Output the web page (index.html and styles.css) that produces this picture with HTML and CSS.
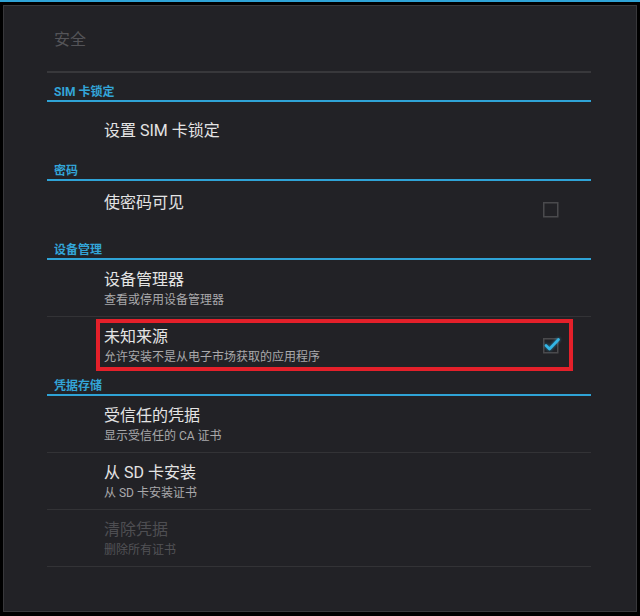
FILE: index.html
```html
<!DOCTYPE html>
<html lang="zh-CN">
<head>
<meta charset="UTF-8">
<title>安全</title>
<link rel="stylesheet" href="styles.css">
</head>
<body>

<div class="topbar"></div>

<div class="panel">

  <div class="page-head">
    <div class="page-title">安全</div>
  </div>

  <div class="prefs">

    <!-- SIM -->
    <div class="category first">SIM 卡锁定</div>
    <div class="pref">
      <div class="pref-text">
        <div class="pref-title">设置 SIM 卡锁定</div>
      </div>
    </div>

    <!-- PASSWORD -->
    <div class="category">密码</div>
    <div class="pref">
      <div class="pref-text raised">
        <div class="pref-title">使密码可见</div>
      </div>
      <svg class="check" width="16" height="16" viewBox="0 0 16 16">
        <rect x="0.75" y="0.75" width="14" height="14" fill="none" stroke="#4a4a4d" stroke-width="1.5"/>
      </svg>
    </div>

    <!-- DEVICE ADMIN -->
    <div class="category">设备管理</div>
    <div class="pref">
      <div class="pref-text">
        <div class="pref-title">设备管理器</div>
        <div class="pref-summary">查看或停用设备管理器</div>
      </div>
    </div>
    <div class="pref marked">
      <div class="pref-text">
        <div class="pref-title">未知来源</div>
        <div class="pref-summary">允许安装不是从电子市场获取的应用程序</div>
      </div>
      <svg class="check on" width="16" height="16" viewBox="0 0 16 16">
        <rect x="0.75" y="0.75" width="14" height="14" fill="none" stroke="#4a4a4d" stroke-width="1.5"/>
        <path d="M3 7.5 L6.5 11 L15.5 1.5" fill="none" stroke="#33b5e5" stroke-width="2.6" stroke-linecap="round" stroke-linejoin="round"/>
      </svg>
      <div class="highlight"></div>
    </div>

    <!-- CREDENTIALS -->
    <div class="category">凭据存储</div>
    <div class="pref">
      <div class="pref-text">
        <div class="pref-title">受信任的凭据</div>
        <div class="pref-summary">显示受信任的 CA 证书</div>
      </div>
    </div>
    <div class="pref">
      <div class="pref-text">
        <div class="pref-title">从 SD 卡安装</div>
        <div class="pref-summary">从 SD 卡安装证书</div>
      </div>
    </div>
    <div class="pref disabled last">
      <div class="pref-text">
        <div class="pref-title">清除凭据</div>
        <div class="pref-summary">删除所有证书</div>
      </div>
    </div>

  </div>
</div>

</body>
</html>
```

FILE: styles.css
```css
* { box-sizing: border-box; }
html, body { margin: 0; height: 100%; }
body {
  background: #000;
  font-family: Roboto, "Noto Sans CJK SC", sans-serif;
  overflow: hidden;
}

.topbar { height: 2px; background: #2fa3d6; }

.panel {
  margin: 3px 0 0 3px;
  width: 634px;
  height: 607px;
  background: #222226;
  border: 1px solid #38383b;
}

/* PAGE TITLE */
.page-head {
  margin: 0 45px 0 43px;
  height: 67px;
  padding: 2px 0 0 7px;
  border-bottom: 2px solid #38383b;
}
.page-title {
  line-height: 64px;
  font-size: 16px;
  color: #545458;
}

/* PREFERENCE LIST */
.prefs { margin: 0 45px 0 43px; }

.category {
  height: 23px;
  display: flex;
  align-items: flex-end;
  padding: 0 0 1px 7px;
  border-bottom: 2px solid #2fa3d6;
  font-size: 12px;
  line-height: 14px;
  font-weight: bold;
  color: #33a5d8;
}
.category.first { margin-top: 6px; }

.pref {
  position: relative;
  height: 56px;
  display: flex;
  align-items: center;
  padding: 1px 32px 0 57px;
}
.pref + .pref { height: 57px; border-top: 1px solid #333336; }
.pref.last { height: 58px; border-bottom: 1px solid #333336; }

.pref-text { flex: 1; padding-top: 1px; }
.pref-text.raised { padding-bottom: 15px; }

.pref-title {
  font-size: 16px;
  line-height: 20px;
  color: #e4e4e4;
}
.pref-summary {
  margin-top: 2px;
  font-size: 12px;
  line-height: 16px;
  color: #a9a9ab;
}

.pref.disabled .pref-title { color: #4e4e52; }
.pref.disabled .pref-summary { color: #525256; }

.check { overflow: visible; flex-shrink: 0; }
.check.on path { filter: drop-shadow(0 0 1.5px rgba(51, 181, 229, 0.7)); }

/* annotation box */
.highlight {
  position: absolute;
  left: 49px;
  top: 2px;
  width: 477px;
  height: 52px;
  border: 4px solid #e4202a;
}
```
